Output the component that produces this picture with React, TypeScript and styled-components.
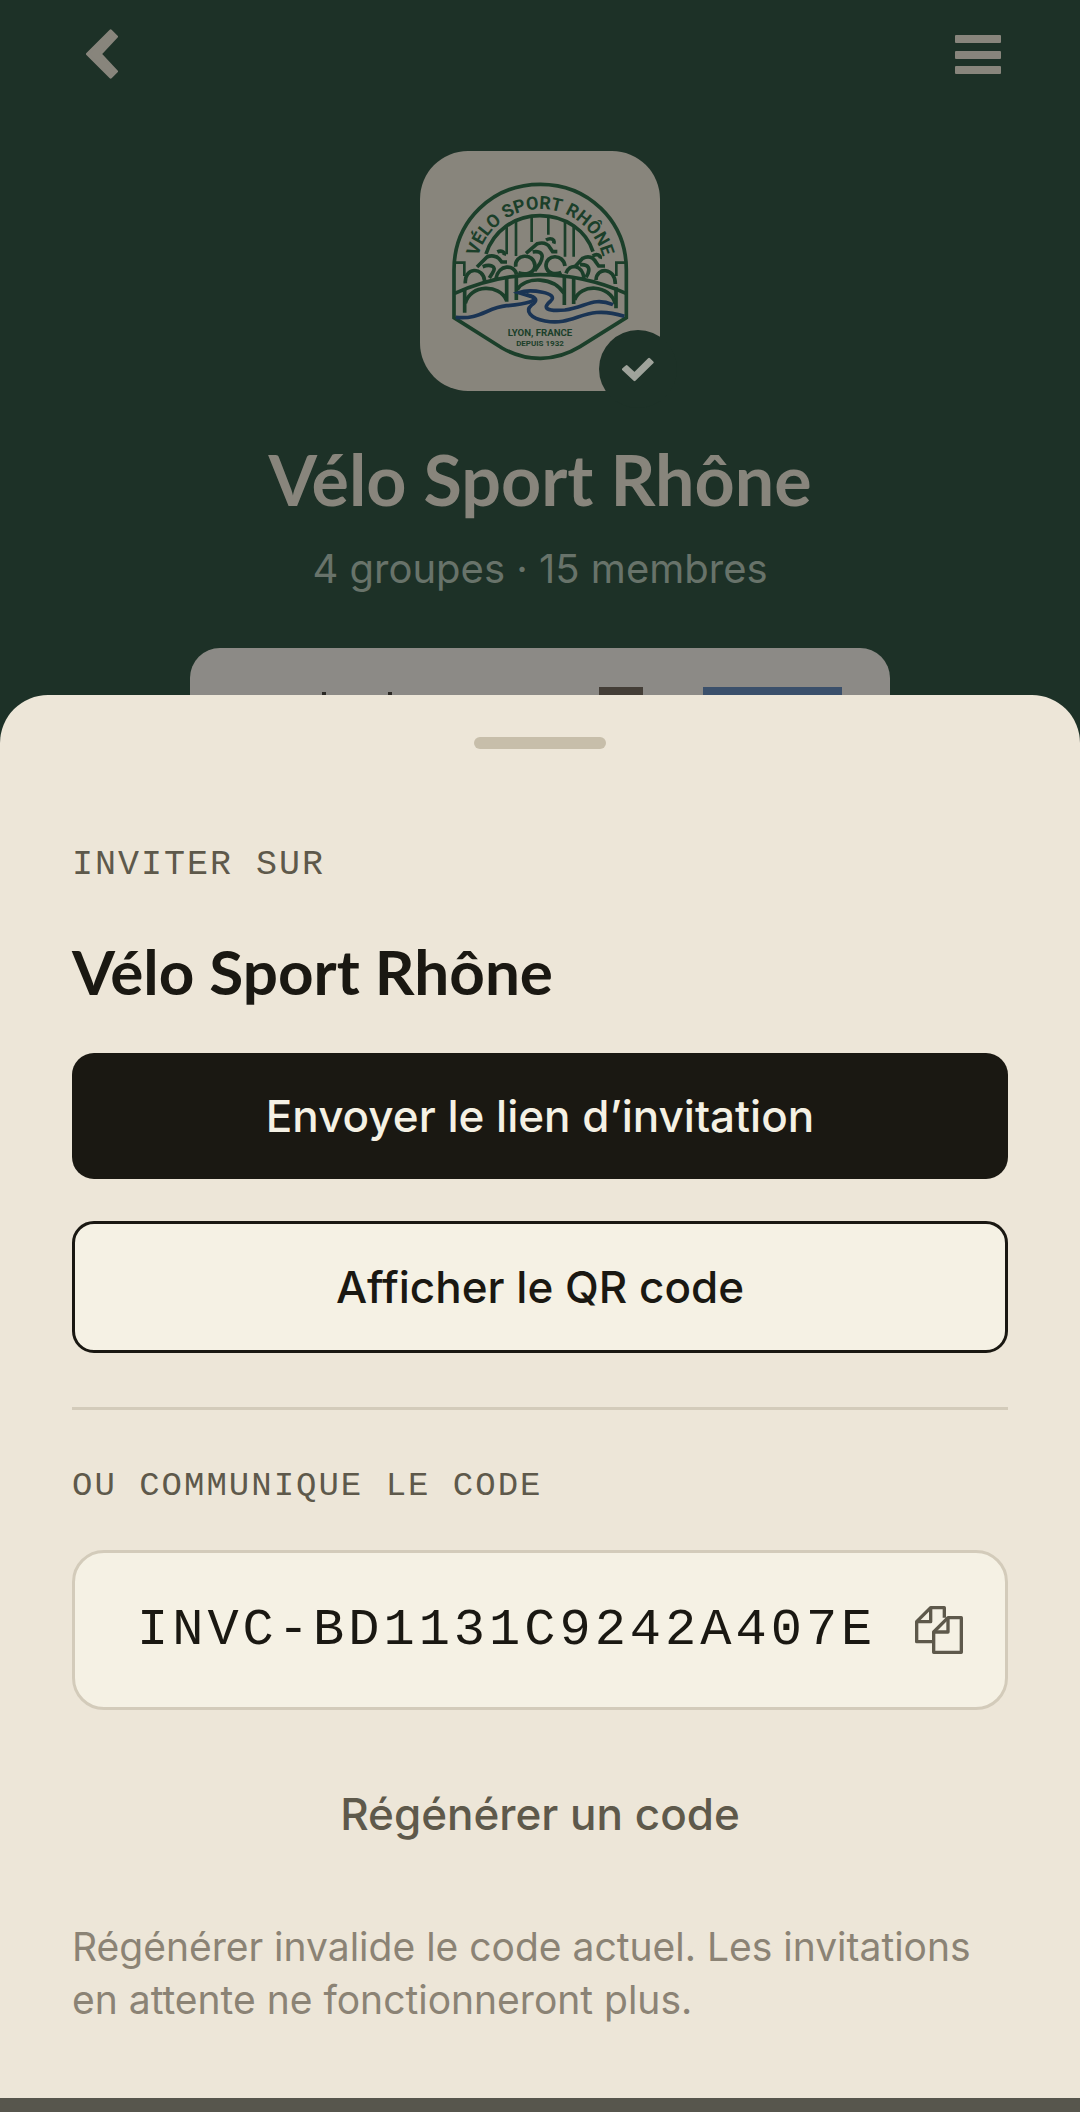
import React, { useState } from 'react';
import styled, { createGlobalStyle } from 'styled-components';

const colors = {
  forest: '#1d3127',
  dimmed: '#88857c',
  dimmedText: '#68736a',
  logoGreen: '#1b3f2a',
  logoBlue: '#1a3454',
  sheet: '#ede6d8',
  cream: '#f5f1e4',
  ink: '#1a1812',
  muted: '#5e594b',
  hint: '#8b8375',
  border: '#d3cbba',
  handle: '#c7beaa',
};

const CLUB_NAME = 'Vélo Sport Rhône';

export default function App() {
  const [code] = useState('INVC-BD1131C9242A407E');

  return (
    <>
      <GlobalStyle />
      <Hero>
        <TopBar>
          <IconButton aria-label="Retour">
            <BackIcon />
          </IconButton>
          <IconButton aria-label="Menu">
            <MenuIcon />
          </IconButton>
        </TopBar>
        <Avatar>
          <ClubLogo />
          <Badge>
            <CheckIcon />
          </Badge>
        </Avatar>
        <ClubTitle>{CLUB_NAME}</ClubTitle>
        <ClubStats>4 groupes · 15 membres</ClubStats>
        <PartnerCard>
          <Stems>
            <Stem />
            <Stem />
          </Stems>
          <Picture $width={44} $color="#443e37" />
          <Picture $width={139} $color="#3b506b" />
        </PartnerCard>
      </Hero>
      <Sheet>
        <Handle />
        <Eyebrow>INVITER SUR</Eyebrow>
        <SheetTitle>{CLUB_NAME}</SheetTitle>
        <Actions>
          <ActionButton $primary>Envoyer le lien d’invitation</ActionButton>
          <ActionButton>Afficher le QR code</ActionButton>
        </Actions>
        <Divider />
        <CodeLabel htmlFor="invite-code">OU COMMUNIQUE LE CODE</CodeLabel>
        <CodeBox>
          <CodeInput id="invite-code" value={code} readOnly />
          <IconButton
            aria-label="Copier le code"
            onClick={() => navigator.clipboard?.writeText(code)}
          >
            <CopyIcon />
          </IconButton>
        </CodeBox>
        <TextButton>Régénérer un code</TextButton>
        <Hint>
          Régénérer invalide le code actuel. Les invitations en attente ne
          fonctionneront plus.
        </Hint>
      </Sheet>
      <BottomInset />
    </>
  );
}

const BackIcon = () => (
  <svg width="32" height="50" viewBox="78 83 96 150" fill={colors.dimmed}>
    <path
      d="M82 158 L152 88 L170 106 L121 158 L170 210 L152 228 Z"
      stroke={colors.dimmed}
      strokeWidth="8"
      strokeLinejoin="round"
    />
  </svg>
);

const MenuIcon = () => (
  <svg width="46" height="40" viewBox="0 0 46 40" fill={colors.dimmed}>
    <rect y="1" width="46" height="8" rx="1" />
    <rect y="17" width="46" height="8" rx="1" />
    <rect y="32" width="46" height="8" rx="1" />
  </svg>
);

const CheckIcon = () => (
  <svg width="32" height="25" viewBox="636 648 97 75" fill="#9fa39b">
    <path
      d="M640 685 L650 676 L674 698 L718 654 L728 664 L674 717 Z"
      stroke="#9fa39b"
      strokeWidth="8"
      strokeLinejoin="round"
    />
  </svg>
);

const CopyIcon = () => (
  <svg
    width="48"
    height="48"
    viewBox="105 77 144 144"
    fill="none"
    stroke={colors.muted}
    strokeWidth="10"
    strokeLinejoin="round"
  >
    <path d="M158 184 H110 V124 L152 82 H193 V112" />
    <path d="M152 82 V124 H110" />
    <path d="M204 112 H244 V216 H161 V155 Z" />
    <path d="M204 112 V155 H161" />
  </svg>
);

const ClubLogo = () => (
  <svg width="240" height="240" viewBox="30 33 720 720" fill="none">
    <defs>
      <path id="logo-arc" d="M198 400 A193 193 0 0 1 584 400" />
    </defs>
    <g stroke={colors.logoGreen} strokeWidth="11">
      {/* frame */}
      <path d="M132 533 V390 C132 240 250 133 391 133 C532 133 649 240 649 390 V533 L510 620 C435 666 350 666 276 624 Z" />
      <path d="M228 342 C250 274 312 227 390 227 C468 227 530 274 549 335" />
      {/* pillars */}
      <path
        strokeWidth="8"
        d="M290 258 V343 M318 241 V348 M365 232 V306 M415 232 V284 M465 242 V350 M491 258 V350"
      />
      <path strokeWidth="8" d="M136 368 H163 V408 M646 368 H619 V408" />
      {/* bridge */}
      <path d="M134 460 C300 385 480 385 648 460" />
      <path d="M164 518 V445 M290 485 V415 M319 480 V410 M463 495 V410 M491 492 V415 M618 505 V442" />
      <path d="M166 490 C180 432 270 432 289 480 M322 448 C350 408 430 410 462 460 M494 480 C510 430 600 432 616 492" />
      {/* left rider */}
      <path d="M166 430 C162 382 220 378 224 423 M258 415 C266 372 314 372 320 404" />
      <path d="M201 381 L231 351 C244 345 260 348 267 356 L275 366 H291 M218 380 C240 372 262 378 248 398 L238 414 M262 336 C274 330 286 336 282 346" />
      {/* middle rider */}
      <path d="M317 380 C312 342 372 336 375 377 C372 402 345 405 325 398 M465 378 C460 340 408 342 408 378 C410 400 435 405 454 397" />
      <path d="M348 340 L382 311 C400 306 412 310 420 323 L428 335 H442 M368 336 C392 332 405 342 390 370 L374 393 M408 300 C422 292 436 298 431 311" />
      {/* right rider */}
      <path d="M468 400 C478 370 516 372 522 415 M558 420 C560 380 616 382 616 432" />
      <path d="M495 380 L518 355 C536 346 550 352 558 367 L566 378 H585 M510 374 C535 372 545 385 528 412 M548 348 C560 340 574 345 570 356" />
    </g>
    <g stroke={colors.logoBlue} strokeWidth="11">
      <path d="M137 532 C210 540 230 503 290 497 C350 492 388 482 366 470 L326 458 C360 446 450 458 422 483 C395 505 410 515 465 510 C530 500 550 470 609 494" />
      <path d="M350 464 C385 472 382 484 364 496 C345 512 360 535 405 543 C500 560 520 490 643 529" />
    </g>
    <g
      fill={colors.logoGreen}
      fontFamily="Roboto, sans-serif"
      fontWeight="700"
      textAnchor="middle"
    >
      <text fontSize="54">
        <textPath href="#logo-arc" startOffset="50%">
          VÉLO SPORT RHÔNE
        </textPath>
      </text>
      <text x="390" y="588" fontSize="29">
        LYON, FRANCE
      </text>
      <text x="390" y="618" fontSize="24">
        DEPUIS 1932
      </text>
    </g>
  </svg>
);

const GlobalStyle = createGlobalStyle`
  * {
    box-sizing: border-box;
  }

  body {
    margin: 0;
    background: ${colors.forest};
    font-family: Inter, 'Noto Sans', sans-serif;
  }

  svg {
    display: block;
  }
`;

const Hero = styled.header`
  display: flex;
  flex-direction: column;
  align-items: center;
  background: ${colors.forest};
`;

const TopBar = styled.div`
  display: flex;
  align-items: center;
  justify-content: space-between;
  align-self: stretch;
  height: 107px;
  padding: 0 79px 0 86px;
`;

const IconButton = styled.button`
  flex: none;
  padding: 0;
  border: 0;
  background: none;
`;

const Avatar = styled.div`
  position: relative;
  margin-top: 44px;
  border-radius: 48px;
  background: ${colors.dimmed};
`;

const Badge = styled.div`
  position: absolute;
  right: -17px;
  bottom: -17px;
  display: flex;
  align-items: center;
  justify-content: center;
  width: 78px;
  height: 78px;
  border-radius: 50%;
  background: ${colors.forest};
`;

const ClubTitle = styled.h1`
  margin: 42px 0 0;
  color: ${colors.dimmed};
  font-family: Lato, sans-serif;
  font-size: 70px;
  font-weight: 700;
  line-height: 92px;
`;

const ClubStats = styled.p`
  margin: 14px 0 0;
  color: ${colors.dimmedText};
  font-size: 40px;
  line-height: 60px;
`;

const PartnerCard = styled.div`
  display: flex;
  align-items: flex-start;
  justify-content: flex-end;
  gap: 60px;
  width: calc(100% - 380px);
  height: 95px;
  margin-top: 49px;
  padding: 39px 48px 0 132px;
  border-radius: 30px 30px 0 0;
  background: #8c8a86;
`;

const Stems = styled.div`
  display: flex;
  flex: 1;
  gap: 62px;
  padding-top: 5px;
`;

const Stem = styled.span`
  width: 4px;
  height: 30px;
  background: #2b2925;
`;

const Picture = styled.div<{ $width: number; $color: string }>`
  width: ${({ $width }) => $width}px;
  height: 48px;
  background: ${({ $color }) => $color};
`;

const Sheet = styled.main`
  position: relative;
  display: flex;
  flex-direction: column;
  margin-top: -48px;
  padding: 42px 72px 72px;
  border-radius: 48px 48px 0 0;
  background: ${colors.sheet};
`;

const Handle = styled.div`
  align-self: center;
  width: 132px;
  height: 12px;
  border-radius: 6px;
  background: ${colors.handle};
`;

const Eyebrow = styled.p`
  margin: 92px 0 0;
  color: ${colors.muted};
  font-family: 'Liberation Mono', monospace;
  font-size: 35px;
  letter-spacing: 2px;
  line-height: 48px;
`;

const SheetTitle = styled.h2`
  margin: 44px 0 0;
  color: ${colors.ink};
  font-family: Lato, sans-serif;
  font-size: 62px;
  font-weight: 700;
  line-height: 76px;
`;

const Actions = styled.div`
  display: flex;
  flex-direction: column;
  gap: 42px;
  margin-top: 44px;
`;

const ActionButton = styled.button<{ $primary?: boolean }>`
  padding: 31px 24px;
  border: ${({ $primary }) => ($primary ? '0' : `3px solid ${colors.ink}`)};
  border-radius: 22px;
  background: ${({ $primary }) => ($primary ? colors.ink : colors.cream)};
  color: ${({ $primary }) => ($primary ? colors.cream : colors.ink)};
  font-family: inherit;
  font-size: 44px;
  font-weight: 500;
  line-height: 64px;
`;

const Divider = styled.hr`
  width: 100%;
  height: 3px;
  margin: 54px 0 0;
  border: 0;
  background: ${colors.border};
`;

const CodeLabel = styled.label`
  margin-top: 52px;
  color: ${colors.muted};
  font-family: 'Liberation Mono', monospace;
  font-size: 34px;
  letter-spacing: 2px;
  line-height: 48px;
`;

const CodeBox = styled.div`
  display: flex;
  align-items: center;
  gap: 24px;
  margin-top: 40px;
  padding: 39px 42px 39px 62px;
  border: 3px solid ${colors.border};
  border-radius: 32px;
  background: ${colors.cream};
`;

const CodeInput = styled.input`
  flex: 1;
  min-width: 0;
  height: 76px;
  padding: 0;
  border: 0;
  outline: 0;
  background: none;
  color: ${colors.ink};
  font-family: 'Liberation Mono', monospace;
  font-size: 52px;
  letter-spacing: 4px;
`;

const TextButton = styled.button`
  align-self: center;
  margin-top: 72px;
  padding: 0;
  border: 0;
  background: none;
  color: ${colors.muted};
  font-family: inherit;
  font-size: 44px;
  font-weight: 500;
  line-height: 64px;
`;

const Hint = styled.p`
  margin: 74px 0 0;
  color: ${colors.hint};
  font-size: 39px;
  line-height: 53px;
`;

const BottomInset = styled.div`
  height: 14px;
  background: #57564d;
`;
